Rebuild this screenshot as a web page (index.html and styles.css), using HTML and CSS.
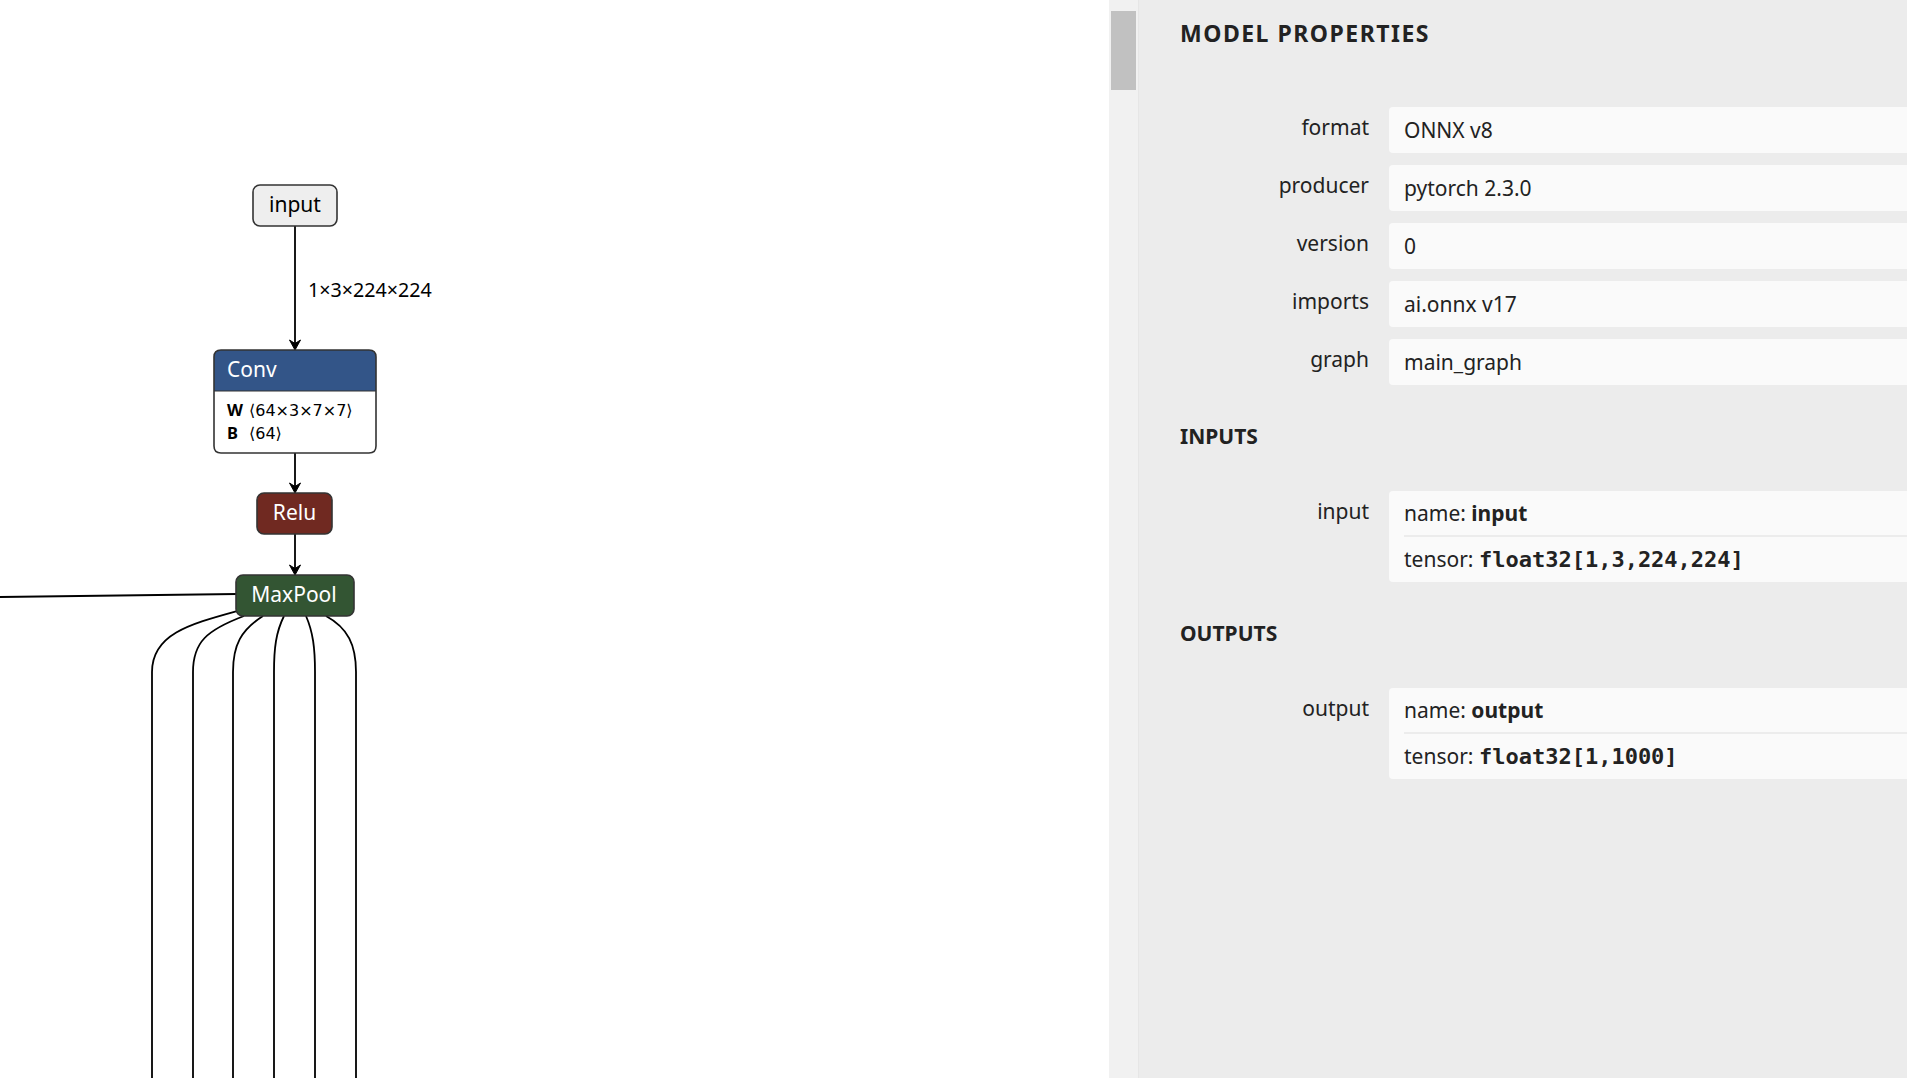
FILE: index.html
```html
<!DOCTYPE html>
<html lang="en">
<head>
<meta charset="utf-8">
<title>Model Properties</title>
<link rel="stylesheet" href="styles.css">
</head>
<body>
<div class="app">
  <div class="graph">
    <svg class="graph-svg" width="1109" height="1078" viewBox="0 0 1109 1078" xmlns="http://www.w3.org/2000/svg">
      <g class="edges">
        <path class="edge" d="M295,226 L295,346"/>
        <polygon class="arrow" points="295,350 289.5,340 295,343.5 300.5,340"/>
        <text class="edge-label" x="308" y="297">1×3×224×224</text>
        <path class="edge" d="M295,453 L295,489"/>
        <polygon class="arrow" points="295,493 289.5,483 295,486.5 300.5,483"/>
        <path class="edge" d="M295,534 L295,571"/>
        <polygon class="arrow" points="295,575 289.5,565 295,568.5 300.5,565"/>
        <path class="edge" d="M237,594 L0,597"/>
        <path class="edge" d="M237,611 C190,624 152,634 152,672 L152,1080"/>
        <path class="edge" d="M244,616 C207,630 193,642 193,672 L193,1080"/>
        <path class="edge" d="M263,616 C241,630 233,645 233,672 L233,1080"/>
        <path class="edge" d="M284,616 C276,632 274,648 274,672 L274,1080"/>
        <path class="edge" d="M306,616 C313,632 315,648 315,672 L315,1080"/>
        <path class="edge" d="M326,616 C348,628 356,645 356,672 L356,1080"/>
      </g>
      <g class="nodes">
        <rect class="node node-input" x="253" y="185" width="84" height="41" rx="7"/>
        <text class="node-text dark" x="295" y="212" text-anchor="middle">input</text>

        <path class="node-body" d="M221,350 H369 Q376,350 376,357 V446 Q376,453 369,453 H221 Q214,453 214,446 V357 Q214,350 221,350 Z"/>
        <path class="hdr-conv" d="M221,350 H369 Q376,350 376,357 V391 H214 V357 Q214,350 221,350 Z"/>
        <line class="node-sep" x1="214" y1="391" x2="376" y2="391"/>
        <path class="node-outline" d="M221,350 H369 Q376,350 376,357 V446 Q376,453 369,453 H221 Q214,453 214,446 V357 Q214,350 221,350 Z"/>
        <text class="node-text light" x="227" y="377">Conv</text>
        <text class="attr-name" x="227" y="416">W</text>
        <text class="attr-value" x="249" y="416">⟨64×3×7×7⟩</text>
        <text class="attr-name" x="227" y="439">B</text>
        <text class="attr-value" x="249" y="439">⟨64⟩</text>

        <rect class="node node-relu" x="257" y="493" width="75" height="41" rx="7"/>
        <text class="node-text light" x="294.5" y="520" text-anchor="middle">Relu</text>

        <rect class="node node-pool" x="236" y="575" width="118" height="41" rx="7"/>
        <text class="node-text light" x="294" y="602" text-anchor="middle">MaxPool</text>
      </g>
    </svg>
  </div>
  <div class="scrollbar"><div class="thumb"></div></div>
  <aside class="sidebar">
    <div class="content">
      <h2 class="title">MODEL PROPERTIES</h2>
      <div class="props">
        <div class="row"><div class="label">format</div><div class="value">ONNX v8</div></div>
        <div class="row"><div class="label">producer</div><div class="value">pytorch 2.3.0</div></div>
        <div class="row"><div class="label">version</div><div class="value">0</div></div>
        <div class="row"><div class="label">imports</div><div class="value">ai.onnx v17</div></div>
        <div class="row"><div class="label">graph</div><div class="value">main_graph</div></div>
      </div>
      <h3 class="section">INPUTS</h3>
      <div class="props">
        <div class="row">
          <div class="label">input</div>
          <div class="value multi">
            <div class="line">name: <b>input</b></div>
            <div class="line">tensor: <code>float32[1,3,224,224]</code></div>
          </div>
        </div>
      </div>
      <h3 class="section">OUTPUTS</h3>
      <div class="props">
        <div class="row">
          <div class="label">output</div>
          <div class="value multi">
            <div class="line">name: <b>output</b></div>
            <div class="line">tensor: <code>float32[1,1000]</code></div>
          </div>
        </div>
      </div>
    </div>
  </aside>
</div>
</body>
</html>
```
FILE: styles.css
```css
html, body {
  margin: 0;
  padding: 0;
  height: 100%;
  overflow: hidden;
}

body {
  font-family: "Noto Sans", "DejaVu Sans", sans-serif;
  color: #222;
  background: #fff;
}

.app {
  display: flex;
  height: 1078px;
}

.graph {
  width: 1109px;
  flex: 0 0 1109px;
  background: #fff;
  overflow: hidden;
}

.graph-svg {
  display: block;
}

.edge {
  fill: none;
  stroke: #000;
  stroke-width: 1.8;
}

.arrow {
  fill: #000;
  stroke: #000;
  stroke-width: 1;
  stroke-linejoin: miter;
}

.edge-label {
  font-family: "Noto Sans", "DejaVu Sans", sans-serif;
  font-size: 19.7px;
  fill: #000;
}

.node {
  stroke: #333;
  stroke-width: 1.6;
}

.node-input { fill: #eeeeee; }
.node-relu { fill: #702921; }
.node-pool { fill: #335533; }

.node-body { fill: #fff; }
.hdr-conv { fill: #335588; }
.node-sep { stroke: #333; stroke-width: 1; }
.node-outline { fill: none; stroke: #333; stroke-width: 1.6; }

.node-text {
  font-family: "Noto Sans", "DejaVu Sans", sans-serif;
  font-size: 21px;
}
.node-text.dark { fill: #000; }
.node-text.light { fill: #fff; }

.attr-name {
  font-family: "Noto Sans", "DejaVu Sans", sans-serif;
  font-size: 16.5px;
  font-weight: bold;
  fill: #000;
}
.attr-value {
  font-family: "DejaVu Sans", "Noto Sans", sans-serif;
  font-size: 16px;
  fill: #000;
}

.scrollbar {
  flex: 0 0 30px;
  width: 30px;
  background: #f1f1f1;
  border-right: 1px solid #e6e6e6;
  padding: 11px 2px 0 2px;
  box-sizing: border-box;
}
.thumb {
  height: 79px;
  background: #c1c1c1;
}

.sidebar {
  flex: 1;
  background: #ececec;
  overflow: hidden;
}

.content {
  padding-left: 41px;
  margin-right: -20px;
}

.title {
  margin: 0;
  padding-top: 18px;
  height: 30px;
  line-height: 30px;
  font-size: 23px;
  font-weight: bold;
  letter-spacing: 1.5px;
  color: #222;
}

.props {
  display: flex;
  flex-direction: column;
  gap: 12px;
}

.title + .props {
  margin-top: 59px;
}

.row {
  display: grid;
  grid-template-columns: 189px 1fr;
  column-gap: 20px;
  font-size: 21px;
}

.label {
  text-align: right;
  line-height: 40px;
  color: #222;
}

.value {
  background: #fafafa;
  border-radius: 4px;
  line-height: 46px;
  padding-left: 15px;
  color: #222;
}

.value.multi {
  line-height: 44px;
}

.value.multi .line + .line {
  border-top: 2px solid #ececec;
}

.value b {
  font-weight: bold;
}

.value code {
  font-family: "DejaVu Sans Mono", "Liberation Mono", monospace;
  font-weight: bold;
  font-size: 22px;
}

.section {
  margin: 36px 0 40px 0;
  height: 30px;
  line-height: 30px;
  font-size: 21px;
  font-weight: bold;
  color: #222;
}
```
